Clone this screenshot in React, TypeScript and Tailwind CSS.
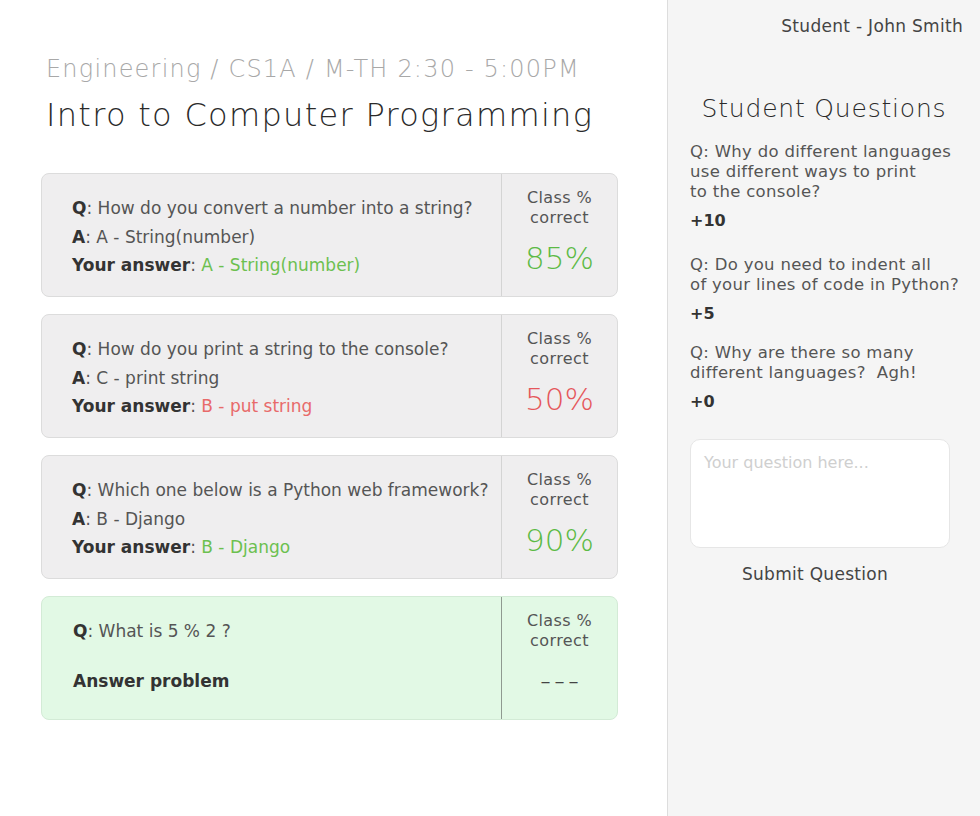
const questions = [
  {
    q: "How do you convert a number into a string?",
    a: "A - String(number)",
    yours: "A - String(number)",
    correct: true,
    pct: "85%",
  },
  {
    q: "How do you print a string to the console?",
    a: "C - print string",
    yours: "B - put string",
    correct: false,
    pct: "50%",
  },
  {
    q: "Which one below is a Python web framework?",
    a: "B - Django",
    yours: "B - Django",
    correct: true,
    pct: "90%",
  },
];

const studentQuestions = [
  { lines: ["Q: Why do different languages", "use different ways to print", "to the console?"], pts: "+10", mt: "mt-[17px]" },
  { lines: ["Q: Do you need to indent all", "of your lines of code in Python?"], pts: "+5", mt: "mt-[24px]" },
  { lines: ["Q: Why are there so many", "different languages?  Agh!"], pts: "+0", mt: "mt-[19px]" },
];

const ClassCorrect = () => (
  <div className="text-[16px] leading-[20px] text-[#555] tracking-[0.4px]">
    <div>Class %</div>
    <div>correct</div>
  </div>
);

export default function App() {
  return (
    <div
      className="flex w-[980px] h-[816px] bg-white text-[#555]"
      style={{ fontFamily: '"DejaVu Sans", sans-serif' }}
    >
      <main className="w-[667px] shrink-0 pt-[52px] pl-[41px]">
        <div className="pl-[5px]">
          <div className="text-[24px] leading-[34px] font-light text-[#a8a8a8] tracking-[1.2px]">
            Engineering / CS1A / M-TH 2:30 - 5:00PM
          </div>
          <h1 className="mt-[7px] text-[32px] leading-[44px] font-light text-[#2a2a2a] tracking-[1.3px]">
            Intro to Computer Programming
          </h1>
        </div>

        <div className="mt-[36px] flex flex-col gap-[17px] w-[577px]">
          {questions.map((item, i) => (
            <div
              key={i}
              className="flex h-[124px] rounded-[8px] border border-[#dcdcdc] bg-[#efeeef]"
            >
              <div className="w-[459px] shrink-0 pl-[30px] pt-[4px] flex flex-col justify-center text-[17px] leading-[28.5px]">
                <div>
                  <span className="font-bold text-[#333]">Q</span>: {item.q}
                </div>
                <div>
                  <span className="font-bold text-[#333]">A</span>: {item.a}
                </div>
                <div>
                  <span className="font-bold text-[#333]">Your answer</span>:{" "}
                  <span className={item.correct ? "text-[#6cc04f]" : "text-[#e86a6a]"}>
                    {item.yours}
                  </span>
                </div>
              </div>
              <div className="flex-1 border-l border-[#d4d4d4] pt-[14px] text-center">
                <ClassCorrect />
                <div
                  className={
                    "mt-[10px] text-[31px] leading-[40px] font-light " +
                    (item.correct ? "text-[#5cba45]" : "text-[#e5575b]")
                  }
                >
                  {item.pct}
                </div>
              </div>
            </div>
          ))}

          <div className="flex h-[124px] rounded-[8px] border border-[#d3ebd6] bg-[#e2f9e5]">
            <div className="w-[459px] shrink-0 pl-[31px] pt-[20px] text-[17px]">
              <div className="leading-[28px]">
                <span className="font-bold text-[#333]">Q</span>: What is 5 % 2 ?
              </div>
              <div className="mt-[22px] leading-[28px] font-bold text-[#333]">
                Answer problem
              </div>
            </div>
            <div className="flex-1 border-l border-[#8f9a90] pt-[14px] text-center">
              <ClassCorrect />
              <div className="mt-[10px] text-[20px] leading-[40px] text-[#444] tracking-[4px] pl-[4px]">
                –––
              </div>
            </div>
          </div>
        </div>
      </main>

      <aside className="flex-1 flex flex-col bg-[#f5f5f5] border-l border-[#dddddd]">
        <div className="pt-[16px] pr-[17px] text-right text-[17px] leading-[20px] text-[#444] tracking-[0.3px]">
          Student - John Smith
        </div>
        <h2 className="mt-[57px] text-center text-[25px] leading-[32px] font-light text-[#2a2a2a] tracking-[0.8px]">
          Student Questions
        </h2>
        <div className="pl-[22px] flex flex-col">
          {studentQuestions.map((sq, i) => (
            <div key={i} className={sq.mt}>
              <div className="text-[16.5px] leading-[20px] text-[#555] tracking-[0.3px]">
                {sq.lines.map((l, j) => (
                  <div key={j} className="whitespace-pre">
                    {l}
                  </div>
                ))}
              </div>
              <div className="mt-[9px] text-[16px] leading-[20px] font-bold text-[#333]">
                {sq.pts}
              </div>
            </div>
          ))}
        </div>
        <textarea
          className="mt-[27px] ml-[22px] w-[260px] h-[109px] resize-none rounded-[10px] border border-[#e6e6e6] bg-white px-[13px] py-[13px] text-[16px] leading-[20px] text-[#555] placeholder:text-[#cfcfcf] outline-none"
          style={{ fontFamily: '"DejaVu Sans", sans-serif' }}
          placeholder="Your question here..."
        />
        <div className="mt-[16px] ml-[22px] w-[250px] text-center text-[17px] leading-[20px] text-[#444] tracking-[0.3px]">
          Submit Question
        </div>
      </aside>
    </div>
  );
}
